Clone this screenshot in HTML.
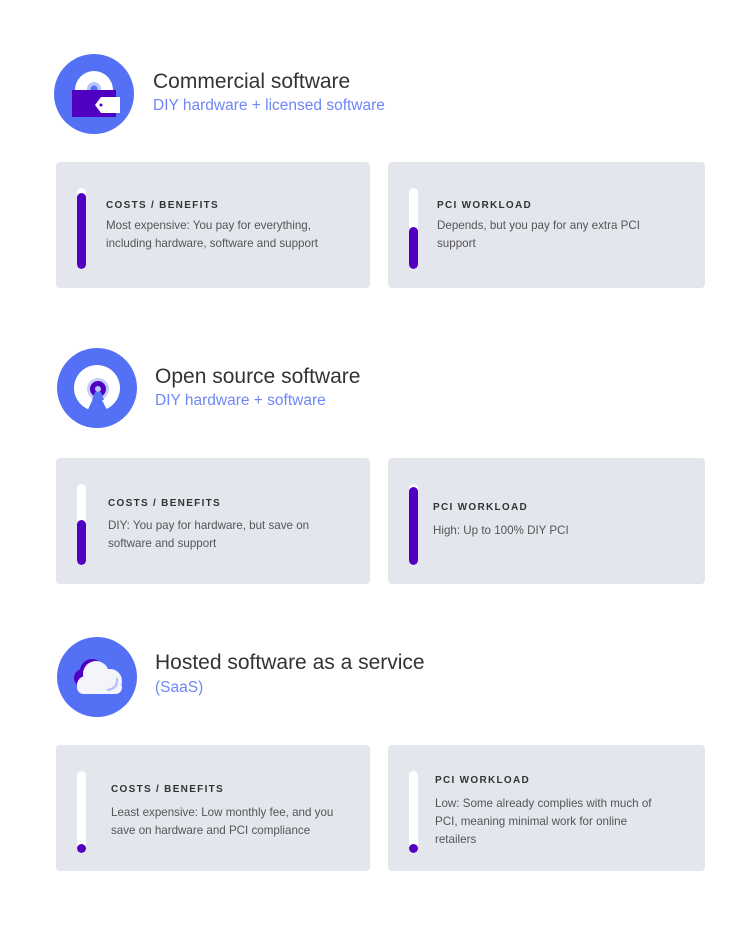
<!DOCTYPE html>
<html><head><meta charset="utf-8"><style>
body{margin:0;width:750px;height:938px;background:#fff;font-family:"Liberation Sans",sans-serif;position:relative;overflow:hidden}
.a{position:absolute}
.t{font-size:21px;color:#333;white-space:nowrap}
.s{font-size:15.5px;color:#6f86f7;white-space:nowrap}
.card{position:absolute;background:#e4e6ee;border-radius:4px}
.bar{position:absolute;width:9px;background:#fff;border-radius:5px;overflow:hidden}
.bar i{position:absolute;left:0;right:0;bottom:0;background:#5000c0;border-radius:5px}
.lb{position:absolute;font-size:10px;font-weight:bold;letter-spacing:1.3px;color:#333;white-space:nowrap}
.tx{position:absolute;font-size:11.6px;line-height:18px;color:#555}
</style></head><body>

<svg class="a" style="left:54px;top:54px" width="80" height="80" viewBox="0 0 80 80">
<circle cx="40" cy="40" r="40" fill="#5470f5"/>
<circle cx="40" cy="36" r="19" fill="#fff"/>
<circle cx="40" cy="35" r="7" fill="#b8c4fb"/>
<circle cx="40" cy="35" r="3.5" fill="#5470f5"/>
<rect x="18" y="36" width="44" height="27" fill="#5000c0"/>
<path d="M41 51 L47 43 H66 V59 H47 Z" fill="#fff"/>
<circle cx="47" cy="51" r="1.5" fill="#5000c0"/>
</svg>
<div class="a t" style="left:153px;top:70px">Commercial software</div>
<div class="a s" style="left:153px;top:97px">DIY hardware + licensed software</div>

<div class="card" style="left:56px;top:162px;width:314px;height:126px"></div>
<div class="bar" style="left:77px;top:188px;height:81px"><i style="top:5px"></i></div>
<div class="lb" style="left:106px;top:200px">COSTS / BENEFITS</div>
<div class="tx" style="left:106px;top:217px">Most expensive: You pay for everything,<br>including hardware, software and support</div>

<div class="card" style="left:388px;top:162px;width:317px;height:126px"></div>
<div class="bar" style="left:409px;top:188px;height:81px"><i style="top:39px"></i></div>
<div class="lb" style="left:437px;top:200px">PCI WORKLOAD</div>
<div class="tx" style="left:437px;top:217px">Depends, but you pay for any extra PCI<br>support</div>

<svg class="a" style="left:57px;top:348px" width="80" height="80" viewBox="0 0 80 80">
<circle cx="40" cy="40" r="40" fill="#5470f5"/>
<circle cx="40" cy="40" r="23" fill="#fff"/>
<path d="M40 42 L28 68 H53 Z" fill="#5470f5"/>
<circle cx="41" cy="41" r="11" fill="#c4cdfb"/>
<circle cx="41" cy="41" r="8" fill="#5000c0"/>
<circle cx="41" cy="41" r="3" fill="#b8c4fb"/>
<path d="M38 44 L35 52 H47 L44 44 Z" fill="#5470f5"/>
</svg>
<div class="a t" style="left:155px;top:365px">Open source software</div>
<div class="a s" style="left:155px;top:392px">DIY hardware + software</div>

<div class="card" style="left:56px;top:458px;width:314px;height:126px"></div>
<div class="bar" style="left:77px;top:484px;height:81px"><i style="top:36px"></i></div>
<div class="lb" style="left:108px;top:498px">COSTS / BENEFITS</div>
<div class="tx" style="left:108px;top:517px">DIY: You pay for hardware, but save on<br>software and support</div>

<div class="card" style="left:388px;top:458px;width:317px;height:126px"></div>
<div class="bar" style="left:409px;top:484px;height:81px"><i style="top:3px"></i></div>
<div class="lb" style="left:433px;top:502px">PCI WORKLOAD</div>
<div class="tx" style="left:433px;top:522px">High: Up to 100% DIY PCI</div>

<svg class="a" style="left:57px;top:637px" width="80" height="80" viewBox="0 0 80 80">
<circle cx="40" cy="40" r="40" fill="#5470f5"/>
<circle cx="35" cy="34" r="12" fill="#5000c0"/>
<circle cx="26" cy="41" r="9" fill="#5000c0"/>
<g fill="#f4f5fb">
<circle cx="39" cy="37" r="13"/>
<circle cx="53" cy="44" r="12"/>
<circle cx="29" cy="48" r="9"/>
<rect x="20" y="44" width="45" height="13" rx="6.5"/>
</g>
<path d="M60 42 Q61 51 51 53" stroke="#b8c4fb" stroke-width="2.5" fill="none" stroke-linecap="round"/>
</svg>
<div class="a t" style="left:155px;top:651px">Hosted software as a service</div>
<div class="a s" style="left:155px;top:679px">(SaaS)</div>

<div class="card" style="left:56px;top:745px;width:314px;height:126px"></div>
<div class="bar" style="left:77px;top:771px;height:82px"><i style="height:9px"></i></div>
<div class="lb" style="left:111px;top:784px">COSTS / BENEFITS</div>
<div class="tx" style="left:111px;top:804px">Least expensive: Low monthly fee, and you<br>save on hardware and PCI compliance</div>

<div class="card" style="left:388px;top:745px;width:317px;height:126px"></div>
<div class="bar" style="left:409px;top:771px;height:82px"><i style="height:9px"></i></div>
<div class="lb" style="left:435px;top:775px">PCI WORKLOAD</div>
<div class="tx" style="left:435px;top:795px">Low: Some already complies with much of<br>PCI, meaning minimal work for online<br>retailers</div>

</body></html>
